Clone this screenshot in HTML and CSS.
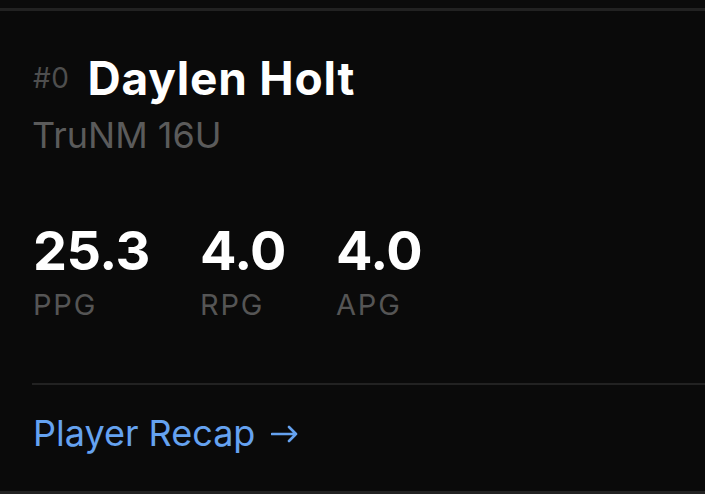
FILE: index.html
```html
<!DOCTYPE html>
<html lang="en">

<head>
    <meta charset="UTF-8">
    <meta name="viewport" content="width=device-width, initial-scale=1.0">
    <title>Daylen Holt</title>
    <link rel="stylesheet" href="styles.css">
</head>

<body>

    <div class="player-card">
        <div class="player-head">
            <span class="jersey">#0</span>
            <h1 class="player-name">Daylen Holt</h1>
        </div>
        <div class="team">TruNM 16U</div>

        <div class="stats">
            <div class="stat">
                <div class="stat-value">25.3</div>
                <div class="stat-label">PPG</div>
            </div>
            <div class="stat">
                <div class="stat-value">4.0</div>
                <div class="stat-label">RPG</div>
            </div>
            <div class="stat">
                <div class="stat-value">4.0</div>
                <div class="stat-label">APG</div>
            </div>
        </div>

        <div class="divider"></div>

        <a class="recap-link" href="#">
            Player Recap
            <svg class="arrow" width="28" height="18" viewBox="0 0 28 18" fill="none">
                <path d="M1 9H25M18 2L25 9L18 16" stroke="currentColor" stroke-width="2.6" stroke-linecap="round" stroke-linejoin="round" />
            </svg>
        </a>
    </div>

</body>

</html>
```

FILE: styles.css
```css
* {
    margin: 0;
    padding: 0;
    box-sizing: border-box;
}

body {
    font-family: Inter, "Noto Sans", sans-serif;
    background-color: #0b0b0b;
    color: #ffffff;
    padding-top: 8px;
}

.player-card {
    border-top: 3px solid #222222;
    border-bottom: 3px solid #222222;
    background-color: #0a0a0a;
    padding: 44px 0 40px 32px;
}

.player-head {
    display: flex;
    align-items: center;
    gap: 18px;
    height: 46px;
}

.jersey {
    font-size: 28px;
    line-height: 28px;
    color: #4e4e4e;
    padding-left: 1px;
    letter-spacing: 0.5px;
}

.player-name {
    font-size: 46px;
    line-height: 46px;
    font-weight: 700;
    letter-spacing: 0.8px;
}

.team {
    margin-top: 16px;
    font-size: 36px;
    line-height: 36px;
    color: #5b5b5b;
}

.stats {
    display: flex;
    gap: 50px;
    margin-top: 71px;
    padding-left: 1px;
}

.stat-value {
    font-size: 54px;
    line-height: 54px;
    font-weight: 700;
    letter-spacing: -0.5px;
}

.stat-label {
    margin-top: 13px;
    font-size: 29px;
    line-height: 28px;
    color: #555555;
    letter-spacing: 1.8px;
}

.divider {
    height: 2px;
    background-color: #222222;
    margin-top: 64px;
}

.recap-link {
    display: flex;
    align-items: center;
    gap: 16px;
    margin-top: 30px;
    padding-left: 1px;
    font-size: 36px;
    line-height: 36px;
    color: #65a2f0;
    text-decoration: none;
}

.arrow {
    margin-top: 2px;
}
```
